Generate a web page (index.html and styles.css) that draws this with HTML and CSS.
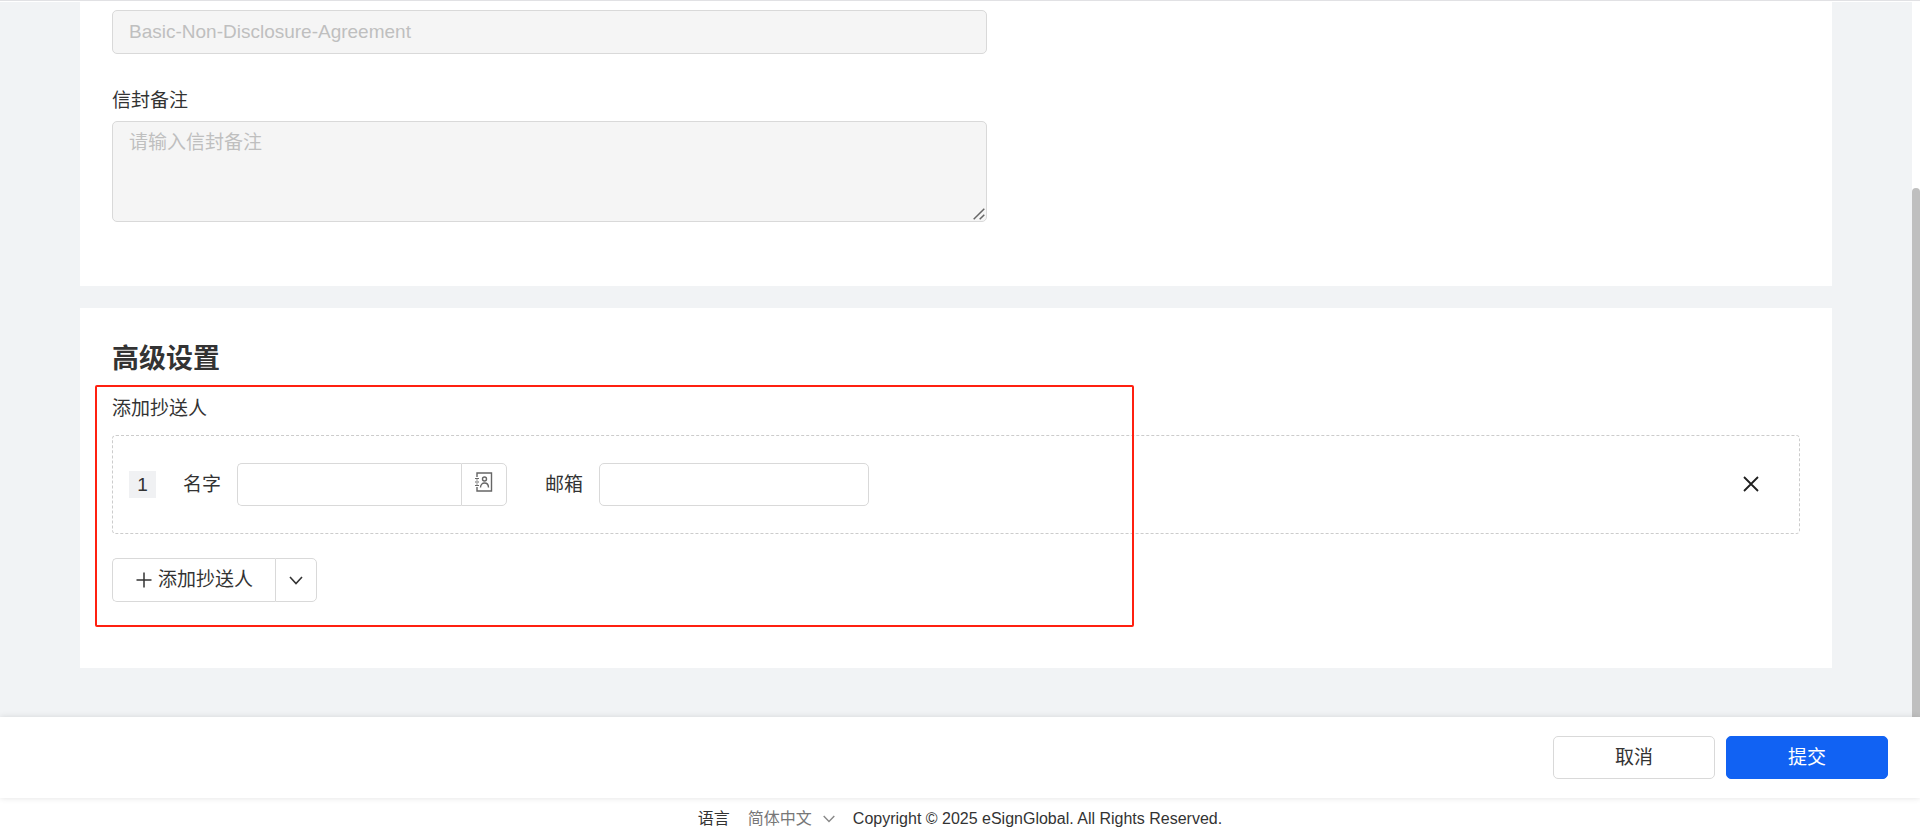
FILE: index.html
```html
<!DOCTYPE html>
<html lang="zh-CN">
<head>
<meta charset="utf-8">
<meta name="viewport" content="width=device-width, initial-scale=1">
<title>eSignGlobal</title>
<link rel="stylesheet" href="styles.css">
</head>
<body>
<div class="viewport">
  <main class="content">
    <section class="card card-basic">
      <input class="field" type="text" aria-label="信封名称" placeholder="Basic-Non-Disclosure-Agreement" disabled>
      <label class="label remark-label" for="remark">信封备注</label>
      <div class="remark-box">
        <textarea class="field remark" id="remark" placeholder="请输入信封备注" disabled></textarea>
        <svg class="grip" width="12" height="12" viewBox="0 0 12 12" fill="none" stroke="#666" stroke-width="1.500"><path d="M.7 11.300L11.300 .7M6.700 11.300L11.300 6.700"/></svg>
      </div>
    </section>
    <section class="card card-advanced">
      <h2 class="title">高级设置</h2>
      <p class="label cc-label">添加抄送人</p>
      <div class="recipient">
        <span class="index">1</span>
        <label class="label name-label" for="cc-name">名字</label>
        <div class="group">
          <input class="group-input" id="cc-name" type="text">
          <button class="group-button" type="button" aria-label="联系人">
            <svg width="18" height="20" viewBox="0 0 18 20" fill="none" stroke="#666" stroke-width="1.4">
              <path d="M2 5V1H16.500V19H2V15M2 7.500V8.500M2 11.500V12.500"/>
              <path d="M0 6.500H4M0 10H4M0 13.500H4" stroke-width="1.200"/>
              <circle cx="9.500" cy="7" r="2"/>
              <path d="M5.500 15.500C5.500 9.500 13.500 9.500 13.500 15.500"/>
            </svg>
          </button>
        </div>
        <label class="label mail-label" for="cc-mail">邮箱</label>
        <input class="mail-input" id="cc-mail" type="email">
        <button class="remove" type="button" aria-label="删除">
          <svg width="16" height="16" viewBox="0 0 16 16" fill="none" stroke="#1f1f1f" stroke-width="1.800"><path d="M1 1L15 15M15 1L1 15"/></svg>
        </button>
      </div>
      <div class="add-group">
        <button class="add" type="button">
          <svg width="16" height="16" viewBox="0 0 16 16" fill="none" stroke="#333" stroke-width="1.500"><path d="M8 .5V15.500M.5 8H15.500"/></svg>
          添加抄送人
        </button>
        <button class="add-more" type="button" aria-label="更多">
          <svg width="14" height="9" viewBox="0 0 14 9" fill="none" stroke="#333" stroke-width="1.600"><path d="M1 1L7 7.500L13 1"/></svg>
        </button>
      </div>
      <div class="highlight"></div>
    </section>
  </main>
  <div class="scrollbar"><div class="thumb"></div></div>
</div>
<div class="actions">
  <button class="action" type="button">取消</button>
  <button class="action action-primary" type="button">提交</button>
</div>
<footer class="footer">
  <label for="language">语言</label>
  <span class="language">
    <select id="language"><option>简体中文</option></select>
    <svg width="12" height="8" viewBox="0 0 12 8" fill="none" stroke="#888" stroke-width="1.400"><path d="M.7 1L6 6.500L11.300 1"/></svg>
  </span>
  <span>Copyright © 2025 eSignGlobal. All Rights Reserved.</span>
</footer>
</body>
</html>
```
FILE: styles.css
```css
* {
  box-sizing: border-box;
}

body {
  display: flex;
  flex-direction: column;
  height: 100vh;
  margin: 0;
  padding-top: 1px;
  border-top: 1px solid #e1e1e4;
  background: #fff;
  color: #333;
  font: 400 19px/28px "Liberation Sans", "Noto Sans CJK SC", sans-serif;
  overflow: hidden;
}

button,
input,
textarea,
select {
  margin: 0;
  border: 1px solid #d9d9d9;
  border-radius: 5px;
  background: #fff;
  color: inherit;
  font: inherit;
}

button {
  padding: 0;
  cursor: pointer;
}

svg {
  display: block;
  flex: none;
}

.viewport {
  display: flex;
  flex: 1;
  min-height: 0;
}

.content {
  flex: 1;
  padding: 0 80px;
  background: #f1f3f5;
  overflow: hidden;
}

.scrollbar {
  display: flex;
  flex-direction: column;
  width: 8px;
  padding-top: 186px;
}

.thumb {
  flex: 1;
  border-radius: 4px 4px 0 0;
  background: #bfbfbf;
}

.card {
  position: relative;
  padding: 0 32px;
  background: #fff;
}

.card-basic {
  display: flex;
  flex-direction: column;
  margin-bottom: 22px;
  padding-top: 8px;
  padding-bottom: 64px;
}

.card-advanced {
  padding-top: 31px;
  padding-bottom: 66px;
}

.field {
  width: 100%;
  max-width: 875px;
  height: 44px;
  padding: 0 16px;
  background: #f5f5f5;
}

.field::placeholder {
  color: #bfbfbf;
  opacity: 1;
}

.remark-label {
  margin-top: 33px;
  margin-bottom: 6px;
}

.remark-box {
  position: relative;
  max-width: 875px;
}

.remark {
  display: block;
  height: 101px;
  padding-top: 7px;
  resize: none;
}

.grip {
  position: absolute;
  right: 2px;
  bottom: 2px;
}

.title {
  margin: 0;
  font-size: 27px;
  font-weight: 700;
  line-height: 40px;
}

.cc-label {
  margin: 16px 0 12px;
}

.recipient {
  display: flex;
  align-items: center;
  height: 99px;
  padding: 0 40px 0 16px;
  border: 1px dashed #ccc;
  border-radius: 4px;
}

.index {
  width: 27px;
  background: #f0f1f3;
  line-height: 27px;
  text-align: center;
}

.name-label {
  margin-left: 27px;
}

.group {
  display: flex;
  width: 270px;
  height: 43px;
  margin-left: 16px;
}

.group-input {
  flex: 1;
  min-width: 0;
  padding: 0 12px;
  border-right: 0;
  border-radius: 5px 0 0 5px;
}

.group-button {
  display: flex;
  justify-content: center;
  width: 46px;
  padding-top: 8px;
  border-radius: 0 5px 5px 0;
}

.mail-label {
  margin-left: 38px;
}

.mail-input {
  width: 270px;
  height: 43px;
  margin-left: 16px;
  padding: 0 12px;
}

.remove {
  margin-left: auto;
  padding-bottom: 2px;
  border: 0;
}

.add-group {
  display: flex;
  height: 44px;
  margin-top: 24px;
}

.add {
  display: flex;
  align-items: center;
  gap: 6px;
  padding: 0 22px 0 23px;
  border-right: 0;
  border-radius: 5px 0 0 5px;
}

.add-more {
  display: flex;
  align-items: center;
  justify-content: center;
  width: 42px;
  border-radius: 0 5px 5px 0;
}

.highlight {
  position: absolute;
  top: 77px;
  left: 15px;
  width: 1039px;
  height: 242px;
  border: 2px solid #ff2010;
  border-radius: 2px;
  pointer-events: none;
}

.actions {
  position: relative;
  display: flex;
  justify-content: flex-end;
  gap: 11px;
  padding: 19px 32px;
  background: #fff;
  box-shadow: 0 0 6px rgba(0, 0, 0, 0.12);
}

.action {
  width: 162px;
  height: 43px;
}

.action-primary {
  border-color: #1162f3;
  background: #1162f3;
  color: #fff;
}

.footer {
  display: flex;
  align-items: center;
  justify-content: center;
  gap: 18px;
  height: 42px;
  font-size: 16px;
}

.language {
  display: flex;
  align-items: center;
  gap: 10px;
  color: #777;
}

.language select {
  appearance: none;
  padding: 0;
  border: 0;
}
```
